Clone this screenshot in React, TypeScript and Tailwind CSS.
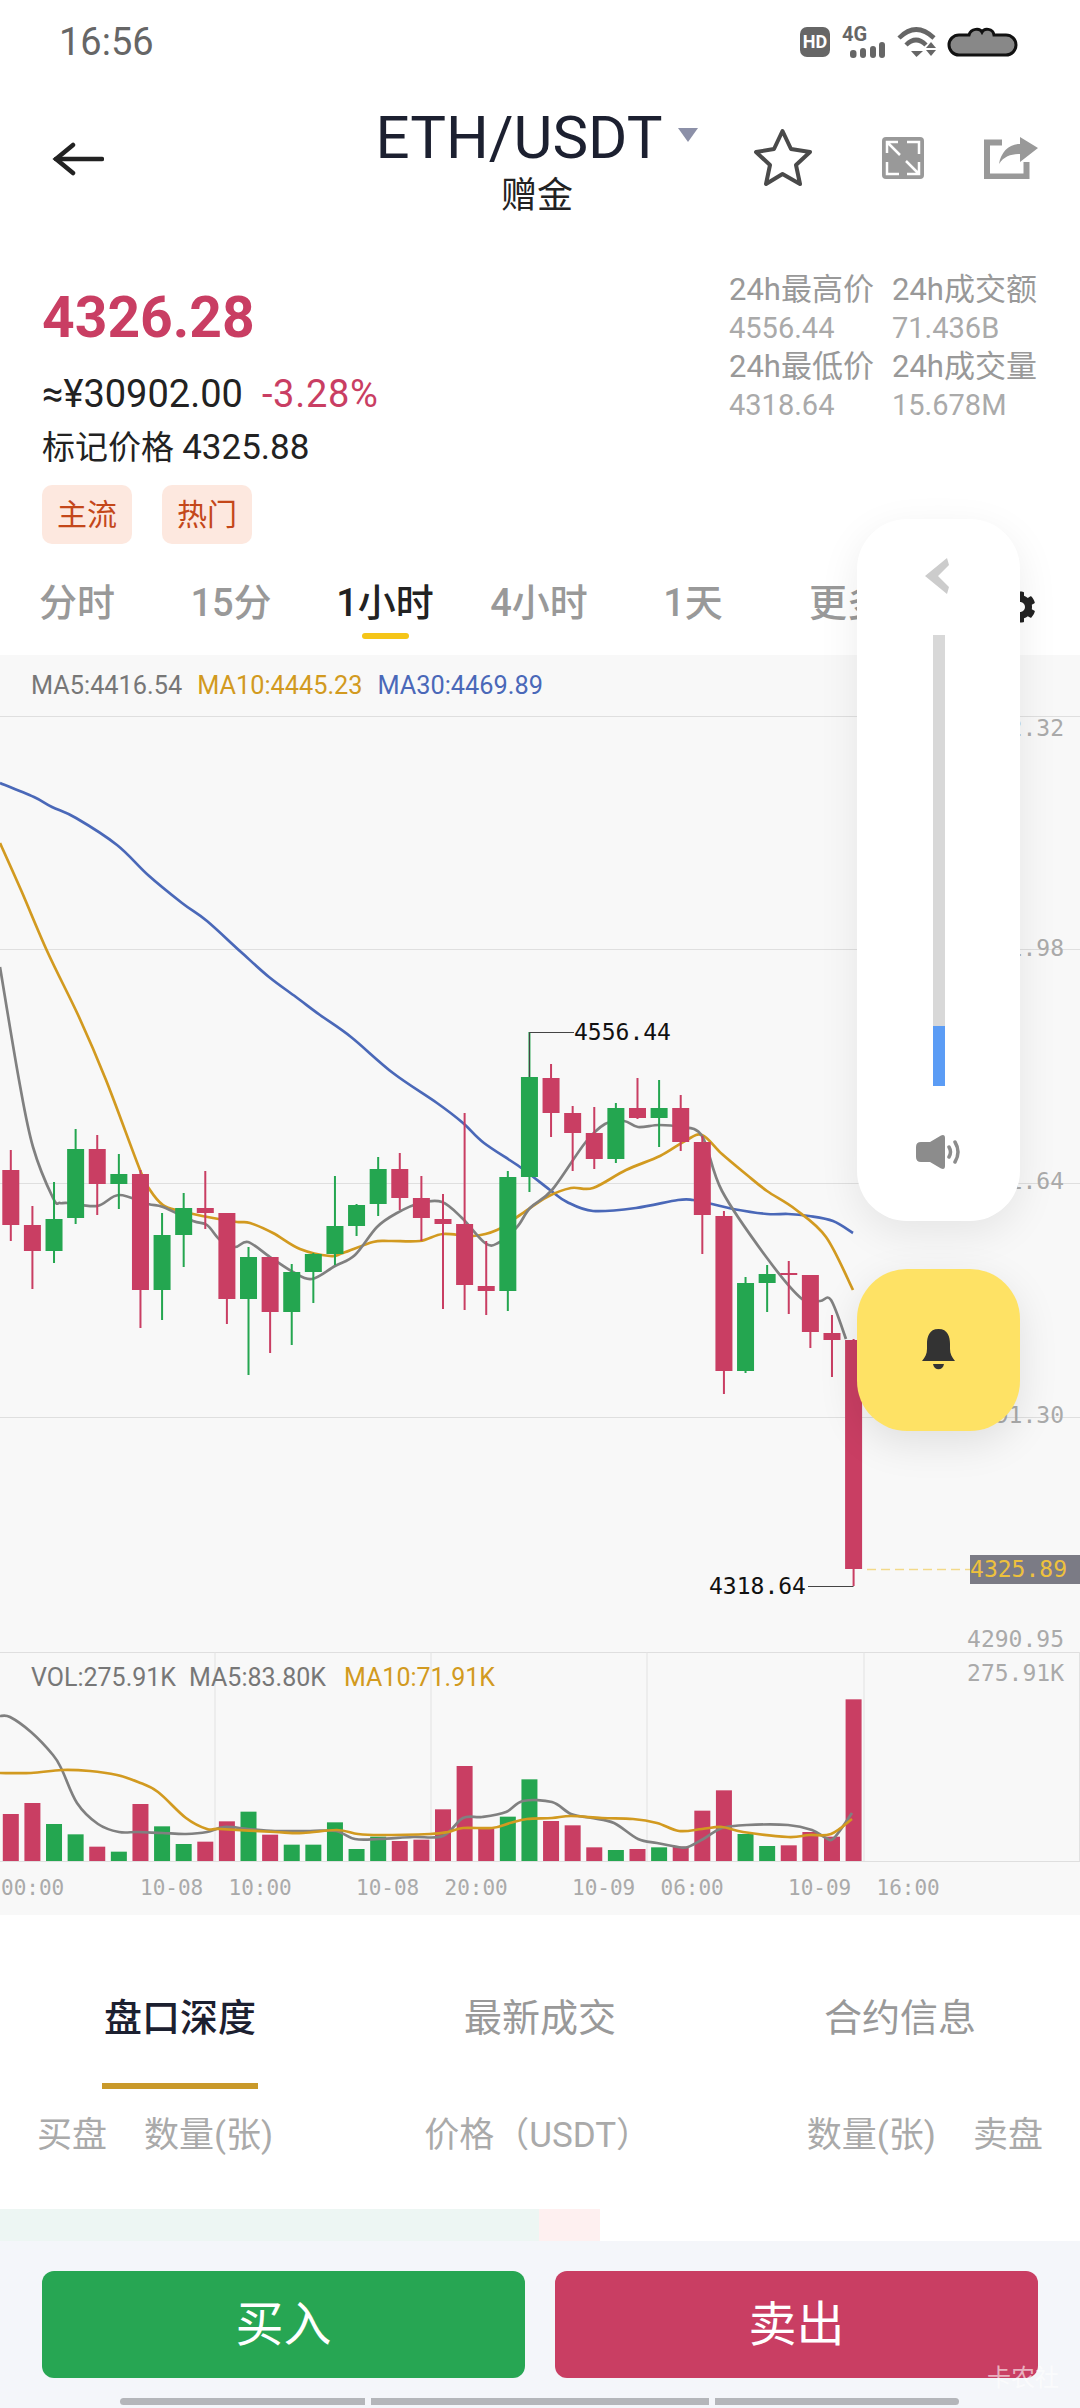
import { FaCog } from "react-icons/fa";

const RED = "#c93e63";
const GREEN = "#24a650";
const ORANGE = "#d29a20";
const BLUE = "#4a68b8";
const GRAY = "#808080";

// [up?, wick top, body top, body bottom, wick bottom], page coordinates
const candles: [number, number, number, number, number][] = [
  [0, 1150, 1170, 1225, 1241], [0, 1206, 1225, 1251, 1289], [1, 1182, 1219, 1251, 1263], [1, 1129, 1149, 1218, 1224],
  [0, 1135, 1149, 1184, 1215], [1, 1154, 1174, 1184, 1209], [0, 1170, 1174, 1290, 1328], [1, 1213, 1235, 1290, 1320],
  [1, 1193, 1208, 1235, 1267], [0, 1171, 1208, 1213, 1229], [0, 1213, 1213, 1299, 1324], [1, 1247, 1257, 1299, 1375],
  [0, 1257, 1257, 1312, 1353], [1, 1264, 1272, 1312, 1345], [1, 1253, 1254, 1272, 1303], [1, 1176, 1226, 1254, 1265],
  [1, 1204, 1205, 1226, 1236], [1, 1157, 1169, 1204, 1216], [0, 1153, 1169, 1198, 1210], [0, 1176, 1198, 1218, 1241],
  [0, 1194, 1219, 1224, 1309], [0, 1113, 1224, 1285, 1310], [0, 1241, 1286, 1291, 1315], [1, 1171, 1177, 1291, 1311],
  [1, 1032, 1077, 1177, 1192], [0, 1064, 1078, 1113, 1137], [0, 1106, 1113, 1133, 1171], [0, 1107, 1133, 1159, 1169],
  [1, 1103, 1108, 1159, 1163], [0, 1078, 1108, 1118, 1119], [1, 1080, 1108, 1118, 1147], [0, 1095, 1108, 1142, 1151],
  [0, 1136, 1142, 1215, 1254], [0, 1211, 1216, 1371, 1394], [1, 1277, 1283, 1371, 1373], [1, 1265, 1274, 1283, 1312],
  [0, 1261, 1273, 1275, 1314], [0, 1275, 1275, 1332, 1348], [0, 1315, 1333, 1340, 1377], [0, 1339, 1340, 1569, 1586],
];

const volTops = [
  522, 489, 552, 583, 620, 635, 492, 559, 612, 605, 544, 515, 584, 614, 614, 547, 627, 590, 603, 599,
  508, 378, 565, 530, 418, 543, 556, 622, 630, 627, 622, 620, 512, 451, 582, 618, 616, 576, 590, 178,
];

const ma30 = [[0, 783], [34, 797], [52, 807], [76, 818], [117, 845], [148, 875], [182, 903], [207, 921], [241, 952], [269, 977], [296, 997], [320, 1015], [351, 1037], [393, 1073], [437, 1103], [463, 1123], [484, 1143], [520, 1167], [550, 1190], [567, 1202], [593, 1211], [636, 1208], [678, 1200], [693, 1200], [712, 1204], [733, 1209], [767, 1214], [788, 1214], [809, 1216], [833, 1221], [853, 1233]];
const ma10 = [[0, 843], [21, 890], [48, 953], [79, 1017], [106, 1080], [140, 1170], [150, 1190], [163, 1205], [180, 1211], [213, 1218], [237, 1222], [250, 1223], [273, 1233], [300, 1249], [330, 1256], [343, 1253], [373, 1242], [390, 1241], [420, 1241], [443, 1234], [473, 1236], [497, 1230], [520, 1215], [547, 1197], [571, 1188], [593, 1188], [626, 1170], [660, 1156], [685, 1141], [702, 1135], [722, 1154], [747, 1175], [767, 1191], [795, 1209], [826, 1237], [853, 1290]];
const ma5 = [[0, 967], [19, 1080], [33, 1147], [53, 1198], [60, 1203], [68, 1203], [97, 1206], [119, 1195], [148, 1204], [163, 1207], [193, 1221], [207, 1225], [220, 1240], [235, 1247], [248, 1242], [270, 1257], [293, 1272], [312, 1279], [335, 1266], [355, 1255], [377, 1227], [397, 1213], [420, 1203], [442, 1202], [462, 1218], [485, 1243], [498, 1243], [517, 1227], [530, 1208], [552, 1190], [585, 1143], [605, 1124], [624, 1121], [638, 1127], [659, 1125], [680, 1127], [702, 1136], [722, 1191], [767, 1258], [802, 1299], [820, 1301], [831, 1300], [846, 1339]];

const volMa5 = [[0, 1716], [10, 1717], [31, 1732], [53, 1755], [62, 1770], [77, 1803], [98, 1824], [119, 1832], [138, 1832], [162, 1833], [186, 1834], [207, 1832], [224, 1827], [248, 1829], [275, 1831], [310, 1831], [336, 1831], [355, 1839], [379, 1839], [413, 1837], [443, 1836], [463, 1818], [482, 1817], [506, 1812], [523, 1801], [552, 1802], [571, 1814], [592, 1818], [614, 1823], [638, 1839], [657, 1843], [678, 1847], [688, 1847], [705, 1838], [722, 1828], [747, 1825], [788, 1825], [812, 1830], [826, 1838], [834, 1838], [852, 1813]];
const volMa10 = [[0, 1773], [31, 1773], [62, 1770], [90, 1771], [117, 1775], [138, 1782], [158, 1792], [186, 1818], [207, 1829], [220, 1829], [275, 1832], [303, 1833], [337, 1830], [358, 1834], [379, 1835], [430, 1834], [448, 1832], [463, 1828], [492, 1828], [510, 1823], [527, 1819], [552, 1818], [571, 1816], [602, 1818], [633, 1819], [657, 1823], [679, 1831], [702, 1829], [722, 1827], [743, 1832], [788, 1837], [809, 1835], [831, 1834], [852, 1819]];

const gridY = [716, 949, 1183, 1417, 1652];
const volX = [215, 431, 647, 864, 1079.5];
const monoFont = "'DejaVu Sans Mono', monospace";
const uiFont = "Roboto, 'Noto Sans CJK SC', sans-serif";

const cx = (i: number) => 10.8 + 21.61 * i;

// catmull-rom through the sampled points, so the MA lines don't look faceted
function smooth(pts: number[][]) {
  let d = `M${pts[0][0]} ${pts[0][1]}`;
  for (let i = 0; i < pts.length - 1; i++) {
    const p0 = pts[Math.max(i - 1, 0)];
    const p1 = pts[i];
    const p2 = pts[i + 1];
    const p3 = pts[Math.min(i + 2, pts.length - 1)];
    const c1x = p1[0] + (p2[0] - p0[0]) / 6;
    const c1y = p1[1] + (p2[1] - p0[1]) / 6;
    const c2x = p2[0] - (p3[0] - p1[0]) / 6;
    const c2y = p2[1] - (p3[1] - p1[1]) / 6;
    d += `C${c1x.toFixed(1)} ${c1y.toFixed(1)} ${c2x.toFixed(1)} ${c2y.toFixed(1)} ${p2[0]} ${p2[1]}`;
  }
  return d;
}

function Chart() {
  return (
    <svg width="1080" height="1199" viewBox="0 716 1080 1199" className="block">
      {gridY.map((y) => (
        <line key={y} x1="0" x2="1080" y1={y + 0.5} y2={y + 0.5} stroke="#dfdfdf" strokeWidth="1" />
      ))}
      <line x1="0" x2="1080" y1="1861.5" y2="1861.5" stroke="#dfdfdf" strokeWidth="1" />
      {volX.map((x) => (
        <line key={x} x1={x} x2={x} y1="1652" y2="1861" stroke="#e2e2e2" strokeWidth="1" />
      ))}

      <path d={smooth(ma30)} fill="none" stroke={BLUE} strokeWidth="2.7" />
      <path d={smooth(ma10)} fill="none" stroke={ORANGE} strokeWidth="2.7" />
      <path d={smooth(ma5)} fill="none" stroke={GRAY} strokeWidth="2.7" />

      {candles.map(([up, wt, bt, bb, wb], i) => (
        <g key={i} fill={up ? GREEN : RED}>
          <rect x={cx(i) - 1} y={wt} width="2" height={wb - wt} />
          <rect x={cx(i) - 8.5} y={bt} width="17" height={bb - bt} />
        </g>
      ))}

      {volTops.map((t, i) => (
        <rect key={i} x={cx(i) - 8} y={1640 + t / 3} width="16" height={221 - t / 3} fill={candles[i][0] ? GREEN : RED} />
      ))}
      <path d={smooth(volMa5)} fill="none" stroke={GRAY} strokeWidth="2.7" />
      <path d={smooth(volMa10)} fill="none" stroke={ORANGE} strokeWidth="2.7" />

      {/* high / low markers */}
      <path d="M529.5 1077V1032.5H574" fill="none" stroke="#444" strokeWidth="1" />
      <text x="574" y="1040" fontFamily={monoFont} fontSize="23" fill="#111">4556.44</text>
      <path d="M853.5 1586.5H808" fill="none" stroke="#444" strokeWidth="1" />
      <text x="709" y="1594" fontFamily={monoFont} fontSize="23" fill="#111">4318.64</text>

      {/* current price */}
      <line x1="867" x2="970" y1="1569.5" y2="1569.5" stroke="#f3d98a" strokeWidth="1.5" strokeDasharray="9 5" />
      <rect x="970" y="1555" width="110" height="29" fill="#7b7b85" />
      <text x="1067" y="1577" textAnchor="end" fontFamily={monoFont} fontSize="23" fill="#eec13d">4325.89</text>

      {/* axis */}
      {[["4692.32", 736], ["4591.98", 956], ["4491.64", 1189], ["4391.30", 1423], ["4290.95", 1647], ["275.91K", 1681]].map(([label, y]) => (
        <text key={label} x="1064" y={y} textAnchor="end" fontFamily={monoFont} fontSize="23" fill="#aaaaaa">{label}</text>
      ))}

      <text x="31" y="1686" fontFamily={uiFont} fontSize="25" fill="#777777">VOL:275.91K</text>
      <text x="189" y="1686" fontFamily={uiFont} fontSize="25" fill="#777777">MA5:83.80K</text>
      <text x="344" y="1686" fontFamily={uiFont} fontSize="25" fill={ORANGE}>MA10:71.91K</text>

      {[["00:00", 1], ["10-08  10:00", 140], ["10-08  20:00", 356], ["10-09  06:00", 572], ["10-09  16:00", 788]].map(([label, x]) => (
        <text key={label} x={x} y="1895" xmlSpace="preserve" fontFamily={monoFont} fontSize="21" fill="#aaaaaa">{label}</text>
      ))}
    </svg>
  );
}

function StatusBar() {
  return (
    <div className="flex h-[84px] items-center justify-between pl-[59px] pr-[62px]">
      <span className="text-[38px] leading-none text-[#666]">16:56</span>
      <div className="flex items-center">
        <span className="flex h-[30px] w-[30px] items-center justify-center rounded-[7px] bg-[#666] text-[18px] font-bold leading-none text-white">HD</span>
        <div className="ml-[12px] flex w-[54px] flex-col">
          <span className="text-[20px] font-bold leading-[15px] text-[#666]">4G</span>
          <svg width="36" height="16" viewBox="0 0 36 16" className="ml-[8px]" fill="#666">
            <rect x="0" y="8" width="6.5" height="8" rx="3" />
            <rect x="10" y="6" width="6" height="10" rx="3" />
            <rect x="20" y="4" width="6" height="12" rx="3" />
            <rect x="29" y="0" width="6" height="16" rx="3" />
          </svg>
        </div>
        <svg width="40" height="30" viewBox="0 0 40 30" className="ml-[1px]" fill="#666">
          <path d="M2 11Q19-6 37 11" fill="none" stroke="#666" strokeWidth="4.5" />
          <path d="M9 18Q19 8 29 18" fill="none" stroke="#666" strokeWidth="4.5" />
          <path d="M14 24H26L19.5 30Z" />
          <path d="M29 21L34 15L39 21Z" />
          <path d="M29 23H39L34 29Z" />
        </svg>
        <svg width="71" height="30" viewBox="0 0 71 30" className="ml-[10px]">
          <path d="M12 8H22C24 1 33 1 35 5C37 1 46 1 47 8H59A10 10 0 0 1 59 28H12A10 10 0 0 1 12 8Z" fill="#888" stroke="#111" strokeWidth="3" />
        </svg>
      </div>
    </div>
  );
}

function NavBar() {
  return (
    <div className="grid h-[146px] grid-cols-[1fr_auto_1fr]">
      <div className="pl-[52px] pt-[58px]">
        <svg width="52" height="34" viewBox="0 0 52 34" fill="none" stroke="#222" strokeWidth="4.5" strokeLinecap="round">
          <path d="M50 17H4" />
          <path d="M21 3L4 17L21 31" />
        </svg>
      </div>
      <div className="mr-[6px] flex flex-col items-center pt-[26px]">
        <div className="flex items-start">
          <span className="text-[60px] leading-[56px] text-[#1c2030]">ETH/USDT</span>
          <svg width="20" height="14" viewBox="0 0 20 14" className="ml-[16px] mt-[18px]" fill="#8c90a8">
            <path d="M0 0H20L10 14Z" />
          </svg>
        </div>
        <span className="mt-[10px] text-[36px] leading-[40px] text-[#222]">赠金</span>
      </div>
      <div className="flex items-start justify-end pr-[42px] pt-[44px]">
        <svg width="60" height="60" viewBox="0 0 60 60" fill="none" stroke="#4a4a4a" strokeWidth="4" strokeLinejoin="round" className="mr-[69px]">
          <path d="M29.5 3L38 21L57 24L43 37L47 56L29.5 46L13 56L17 37L3 24L21 21Z" />
        </svg>
        <svg width="42" height="42" viewBox="0 0 42 42" fill="none" stroke="#fff" strokeWidth="2.5" className="mr-[60px] mt-[9px]">
          <rect x="0" y="0" width="42" height="42" rx="4" fill="#999" stroke="none" />
          <path d="M5 16V5H16M6 6L18 18M25 5H37V17M5 25V37H17M37 25V37H25M24 24L36 36" />
        </svg>
        <svg width="54" height="42" viewBox="0 0 54 42" className="mt-[9px]" fill="#999">
          <path d="M18 5.5H3V39.5H42.5V25" fill="none" stroke="#999" strokeWidth="6" />
          <path d="M36 0L54 11L36 25V17C28 17 20 19 15 27C17 15 25 7 36 7Z" />
        </svg>
      </div>
    </div>
  );
}

function PriceInfo() {
  return (
    <div className="flex items-start justify-between pl-[42px] pr-[43px] pt-[40px]">
      <div className="pt-[19px]">
        <div className="text-[57px] font-bold leading-[58px] text-[#c93e63]">4326.28</div>
        <div className="mt-[27px] flex h-[40px] items-center text-[38px] leading-none text-[#222]">
          ≈¥30902.00
          <span className="ml-[19px] tracking-[0.7px] text-[#c93e63]">-3.28%</span>
        </div>
        <div className="mt-[14px] h-[40px] text-[33px] leading-[40px] text-[#222]">
          标记价格 <span className="text-[35px]">4325.88</span>
        </div>
        <div className="mt-[17px] flex gap-[30px]">
          <span className="flex h-[59px] w-[90px] items-center justify-center rounded-[10px] bg-[#fde8df] text-[30px] text-[#c4471a]">主流</span>
          <span className="flex h-[59px] w-[90px] items-center justify-center rounded-[10px] bg-[#fde8df] text-[30px] text-[#c4471a]">热门</span>
        </div>
      </div>
      <div className="grid grid-cols-[163px_145px] content-start text-[#999]">
        <span className="h-[39px] whitespace-nowrap text-[31px] leading-[39px]">24h最高价</span>
        <span className="h-[39px] whitespace-nowrap text-[31px] leading-[39px]">24h成交额</span>
        <span className="h-[38px] text-[29px] leading-[38px] text-[#aaa]">4556.44</span>
        <span className="h-[38px] text-[29px] leading-[38px] text-[#aaa]">71.436B</span>
        <span className="h-[39px] whitespace-nowrap text-[31px] leading-[39px]">24h最低价</span>
        <span className="h-[39px] whitespace-nowrap text-[31px] leading-[39px]">24h成交量</span>
        <span className="h-[38px] text-[29px] leading-[38px] text-[#aaa]">4318.64</span>
        <span className="h-[38px] text-[29px] leading-[38px] text-[#aaa]">15.678M</span>
      </div>
    </div>
  );
}

function PeriodTabs() {
  const tabs = ["分时", "15分", "1小时", "4小时", "1天", "更多"];
  return (
    <div className="flex h-[111px] pt-[37px]">
      {tabs.map((t) => (
        <div key={t} className="flex w-[154px] flex-col items-center">
          <span className={`text-[38px] font-medium leading-[44px] ${t === "1小时" ? "text-[#222]" : "text-[#999]"}`}>{t}</span>
          {t === "1小时" && <div className="mt-[8px] h-[6px] w-[47px] rounded-full bg-[#f5c518]" />}
        </div>
      ))}
      <FaCog size={32} color="#222" className="ml-[80px] mt-[10px]" />
    </div>
  );
}

function VolumePanel() {
  return (
    <div className="absolute left-[857px] top-[519px] flex h-[702px] w-[163px] flex-col items-center rounded-[50px] bg-white pt-[39px] shadow-[0_12px_40px_rgba(0,0,0,0.08)]">
      <svg width="24" height="36" viewBox="0 0 24 36" fill="#cccccc" className="ml-[-4px]">
        <path d="M0 18L22 0L24 7L13 18L24 29L22 36Z" />
      </svg>
      <div className="mt-[41px] flex h-[451px] w-[12px] flex-col justify-end bg-[#d8d8d8]">
        <div className="h-[60px] bg-[#5b9cf5]" />
      </div>
      <svg width="46" height="36" viewBox="0 0 46 36" fill="#8c8c8c" className="mt-[48px]">
        <path d="M5 8H14L25 1.5Q29 0 29 4V32Q29 36 25 34.5L14 28H5Q0 28 0 23V13Q0 8 5 8Z" />
        <path d="M33 13Q36 18 33 23M39 8Q45 18 39 28" fill="none" stroke="#8c8c8c" strokeWidth="3.5" strokeLinecap="round" />
      </svg>
    </div>
  );
}

function AlertButton() {
  return (
    <div className="absolute left-[857px] top-[1269px] flex h-[162px] w-[163px] items-center justify-center rounded-[50px] bg-[#fee265] shadow-[0_12px_40px_rgba(0,0,0,0.1)]">
      <svg width="33" height="42" viewBox="0 0 33 42" fill="#333">
        <path d="M16.5 0C7 0 5 8 5 15V20C5 25 3 28 0 32H33C30 28 28 25 28 20V15C28 8 26 0 16.5 0Z" />
        <path d="M11 35H22C21 42 12 42 11 35Z" />
      </svg>
    </div>
  );
}

export default function App() {
  return (
    <div className="relative h-[2408px] w-[1080px] overflow-hidden bg-white font-['Roboto','Noto_Sans_CJK_SC',sans-serif]">
      <StatusBar />
      <NavBar />
      <PriceInfo />
      <PeriodTabs />

      <div className="h-[1260px] bg-[#f8f8f8]">
        <div className="flex h-[61px] items-center gap-[15px] pl-[31px] text-[25.3px] leading-none">
          <span className="text-[#777]">MA5:4416.54</span>
          <span className="text-[#d29a20]">MA10:4445.23</span>
          <span className="text-[#4a68b8]">MA30:4469.89</span>
        </div>
        <Chart />
      </div>

      <div className="grid h-[174px] grid-cols-3 pt-[80px] text-center text-[38px] leading-[46px] text-[#999]">
        <div className="flex flex-col items-center">
          <span className="font-medium text-[#1c2030]">盘口深度</span>
          <div className="mt-[42px] h-[6px] w-[156px] bg-[#c9992a]" />
        </div>
        <span>最新成交</span>
        <span>合约信息</span>
      </div>

      <div className="flex h-[120px] pl-[37px] pr-[37px] pt-[25px] text-[35px] leading-[44px] text-[#aaa]">
        <span>买盘</span>
        <span className="ml-[37px]">数量(张)</span>
        <span className="ml-[151px]">价格（USDT）</span>
        <span className="ml-auto">数量(张)</span>
        <span className="ml-[37px]">卖盘</span>
      </div>

      <div className="flex h-[32px]">
        <div className="w-[539px] bg-[#edf6f3]" />
        <div className="w-[61px] bg-[#fef0f0]" />
      </div>

      <div className="h-[167px] bg-[#f4f6fa] pt-[30px]">
        <div className="flex justify-between px-[42px]">
          <button className="h-[107px] w-[483px] rounded-[12px] bg-[#27a653] text-[48px] text-white">买入</button>
          <button className="h-[107px] w-[483px] rounded-[12px] bg-[#c93e63] text-[48px] text-white">卖出</button>
        </div>
        <div className="ml-[120px] mt-[20px] flex w-[839px] gap-[6px]">
          <div className="h-[7px] w-[245px] rounded-l-full bg-[#b4b6ba]" />
          <div className="h-[7px] w-[338px] bg-[#b4b6ba]" />
          <div className="h-[7px] w-[244px] rounded-r-full bg-[#b4b6ba]" />
        </div>
      </div>

      <VolumePanel />
      <AlertButton />
      <span className="absolute left-[987px] top-[2364px] text-[24px] leading-[28px] text-white/60">卡农社</span>
    </div>
  );
}
